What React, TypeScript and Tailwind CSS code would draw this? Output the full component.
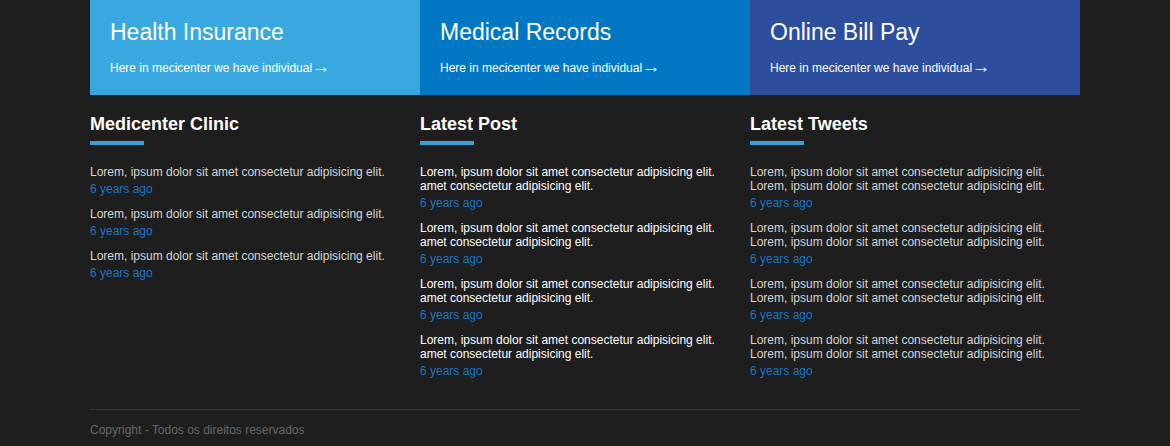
const boxes = [
  { title: 'Health Insurance', bg: 'bg-[#3aa8e0]' },
  { title: 'Medical Records', bg: 'bg-[#0277c4]' },
  { title: 'Online Bill Pay', bg: 'bg-[#2c4e9c]' },
];

const lorem = 'Lorem, ipsum dolor sit amet consectetur adipisicing elit.';

function Heading({ children }: { children: React.ReactNode }) {
  return (
    <div>
      <h3 className="text-[18px] leading-[20px] font-bold text-white">{children}</h3>
      <div className="w-[54px] h-[4px] bg-[#3c9fd6] mt-[7px]" />
    </div>
  );
}

function Item({ lines, light }: { lines: string[]; light?: boolean }) {
  return (
    <div>
      {lines.map((l, i) => (
        <p
          key={i}
          className={`text-[12px] leading-[14px] ${light ? 'text-white' : 'text-[#d6d6d6]'}`}
        >
          {l}
        </p>
      ))}
      <p className="text-[12px] leading-[20px] text-[#1f74c4]">6 years ago</p>
    </div>
  );
}

export default function App() {
  return (
    <div
      className="min-h-[446px] bg-[#1e1e1e]"
      style={{ fontFamily: '"Liberation Sans", Arial, sans-serif' }}
    >
      <div className="w-[990px] mx-auto">
        {/* service boxes */}
        <div className="grid grid-cols-3">
          {boxes.map((b) => (
            <div key={b.title} className={`${b.bg} h-[95px] px-5 pt-[18px]`}>
              <h2 className="text-[23px] leading-[28px] text-white">{b.title}</h2>
              <p className="text-[12px] leading-[16px] text-white mt-[14px]">
                Here in mecicenter we have individual{' '}
                <span className="text-[19px] leading-[10px] relative top-[1px] -ml-[4px]">&rarr;</span>
              </p>
            </div>
          ))}
        </div>

        {/* columns */}
        <div className="grid grid-cols-3 pt-[19px]">
          <div>
            <Heading>Medicenter Clinic</Heading>
            <div className="flex flex-col gap-2 mt-[20px]">
              {[0, 1, 2].map((i) => (
                <Item key={i} lines={[lorem]} />
              ))}
            </div>
          </div>
          <div>
            <Heading>Latest Post</Heading>
            <div className="flex flex-col gap-2 mt-[20px]">
              {[0, 1, 2, 3].map((i) => (
                <Item key={i} light lines={[lorem, 'amet consectetur adipisicing elit.']} />
              ))}
            </div>
          </div>
          <div>
            <Heading>Latest Tweets</Heading>
            <div className="flex flex-col gap-2 mt-[20px]">
              {[0, 1, 2, 3].map((i) => (
                <Item key={i} lines={[lorem, lorem]} />
              ))}
            </div>
          </div>
        </div>

        {/* footer */}
        <div className="mt-[28px] border-t border-[#333333] pt-[12px]">
          <p className="text-[12px] leading-[16px] text-[#666666]">
            Copyright - Todos os direitos reservados
          </p>
        </div>
      </div>
    </div>
  );
}
